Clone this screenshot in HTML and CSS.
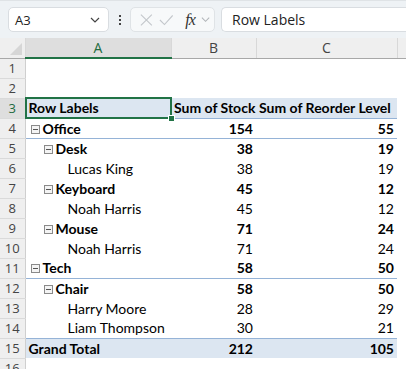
FILE: index.html
```html
<!DOCTYPE html>
<html lang="en">
<head>
<meta charset="UTF-8">
<title>Pivot Table</title>
<link rel="stylesheet" href="styles.css">
</head>
<body>
<div class="toolbar">
    <div class="namebox">
        <span>A3</span>
        <svg width="12" height="8" viewBox="0 0 12 8"><path d="M2 2 L6 6 L10 2" fill="none" stroke="#444" stroke-width="1.2"/></svg>
    </div>
    <div class="dots"><i></i><i></i><i></i></div>
    <div class="fxgroup">
        <svg width="14" height="14" viewBox="0 0 14 14"><path d="M1 1 L13 13 M13 1 L1 13" stroke="#c3c7cb" stroke-width="1.2"/></svg>
        <svg width="16" height="14" viewBox="0 0 16 14"><path d="M1 7 L6 12 L15 2" fill="none" stroke="#c3c7cb" stroke-width="1.2"/></svg>
        <span class="fx">fx</span>
        <svg width="10" height="7" viewBox="0 0 10 7"><path d="M1 1.5 L5 5.5 L9 1.5" fill="none" stroke="#b0b4b8" stroke-width="1.1"/></svg>
    </div>
    <div class="formula">Row Labels</div>
</div>

<table class="sheet">
    <colgroup>
        <col class="c-rh"><col class="c-a"><col class="c-b"><col class="c-c"><col>
    </colgroup>
    <tr class="colhead">
        <th class="corner"><span class="tri"></span></th>
        <th class="sel">A</th><th>B</th><th>C</th><th></th>
    </tr>
    <tr><th>1</th><td></td><td></td><td></td><td></td></tr>
    <tr><th>2</th><td></td><td></td><td></td><td></td></tr>
    <tr class="head">
        <th class="rsel">3</th>
        <td class="active">Row Labels<span class="handle"></span></td>
        <td>Sum of Stock</td><td>Sum of Reorder Level</td><td class="blank"></td>
    </tr>
    <tr class="cat">
        <th>4</th><td class="l1"><span class="mbox"></span>Office</td><td class="n">154</td><td class="n">55</td><td class="blank"></td>
    </tr>
    <tr class="sub">
        <th>5</th><td class="l2"><span class="mbox"></span>Desk</td><td class="n">38</td><td class="n">19</td><td></td>
    </tr>
    <tr>
        <th>6</th><td class="l3">Lucas King</td><td class="n">38</td><td class="n">19</td><td></td>
    </tr>
    <tr class="sub">
        <th>7</th><td class="l2"><span class="mbox"></span>Keyboard</td><td class="n">45</td><td class="n">12</td><td></td>
    </tr>
    <tr>
        <th>8</th><td class="l3">Noah Harris</td><td class="n">45</td><td class="n">12</td><td></td>
    </tr>
    <tr class="sub">
        <th>9</th><td class="l2"><span class="mbox"></span>Mouse</td><td class="n">71</td><td class="n">24</td><td></td>
    </tr>
    <tr>
        <th>10</th><td class="l3">Noah Harris</td><td class="n">71</td><td class="n">24</td><td></td>
    </tr>
    <tr class="cat">
        <th>11</th><td class="l1"><span class="mbox"></span>Tech</td><td class="n">58</td><td class="n">50</td><td class="blank"></td>
    </tr>
    <tr class="sub">
        <th>12</th><td class="l2"><span class="mbox"></span>Chair</td><td class="n">58</td><td class="n">50</td><td></td>
    </tr>
    <tr>
        <th>13</th><td class="l3">Harry Moore</td><td class="n">28</td><td class="n">29</td><td></td>
    </tr>
    <tr>
        <th>14</th><td class="l3">Liam Thompson</td><td class="n">30</td><td class="n">21</td><td></td>
    </tr>
    <tr class="total">
        <th>15</th><td>Grand Total</td><td class="n">212</td><td class="n">105</td><td class="blank"></td>
    </tr>
    <tr><th>16</th><td></td><td></td><td></td><td></td></tr>
</table>
</body>
</html>
```

FILE: styles.css
```css
*{box-sizing:border-box;}
body{
    margin:0;
    width:406px;
    height:369px;
    overflow:hidden;
    background:#fff;
    font-family:"Open Sans","Noto Sans",sans-serif;
}
.toolbar{
    height:38px;
    background:#eef2f5;
    border-top:1px solid #dfe3e6;
    display:flex;
    align-items:center;
    padding:0 0 0 8px;
    gap:0;
}
.namebox{
    width:101px;
    height:25px;
    background:#fff;
    border:1px solid #d9dde1;
    border-radius:5px;
    display:flex;
    align-items:center;
    justify-content:space-between;
    padding:0 7px 0 6px;
    font-size:13px;
    color:#222;
}
.dots{
    width:21px;
    display:flex;
    flex-direction:column;
    align-items:center;
    gap:2px;
}
.dots i{display:block;width:2px;height:2px;background:#444;}
.fxgroup{
    width:85px;
    height:25px;
    border:1px solid #dfe3e6;
    border-radius:5px;
    background:#f7f9fa;
    display:flex;
    align-items:center;
    padding:0 4px 0 9px;
    gap:6px;
}
.fx{
    font-family:"Liberation Serif",serif;
    font-style:italic;
    font-size:16px;
    color:#333;
    margin-left:6px;
    letter-spacing:-1px;
}
.formula{
    flex:1;
    height:25px;
    margin-left:6px;
    background:#fff;
    border:1px solid #d9dde1;
    border-right:none;
    border-radius:5px 0 0 5px;
    padding:0 0 0 10px;
    font-size:14px;
    line-height:23px;
    color:#222;
}
.sheet{
    border-collapse:collapse;
    table-layout:fixed;
    width:420px;
    font-family:"Lato","Liberation Sans",sans-serif;
    font-size:14px;
    color:#000;
}
.c-rh{width:25px;}
.c-a{width:146px;}
.c-b{width:85px;}
.c-c{width:141px;}
.sheet tr{height:20px;}
.sheet td{
    padding:0 3px;
    white-space:nowrap;
    overflow:visible;
    height:20px;
}
.sheet th{
    background:#efefef;
    font-weight:normal;
    font-family:"Open Sans","Noto Sans",sans-serif;
    font-size:13px;
    color:#444;
    border-right:1px solid #cfcfcf;
    border-bottom:1px solid #dadada;
    padding:0;
}
.colhead{height:20px;}
.colhead th{
    background:#efefef;
    border-right:1px solid #d8d8d8;
    border-bottom:1px solid #a8a8a8;
    font-size:14px;
    color:#444;
}
.colhead th.sel{
    background:#dedede;
    color:#1e6c41;
    border-bottom:2px solid #217346;
}
.corner{position:relative;}
.tri{
    position:absolute;
    right:3px;
    bottom:3px;
    width:0;
    height:0;
    border-left:12px solid transparent;
    border-bottom:12px solid #d6d6d6;
}
.sheet th.rsel{background:#dedede;color:#1e6c41;}
.head td{background:#dce6f1;font-weight:bold;border-bottom:1px solid #95b3d7;}
.head td.blank{background:none;border:none;}
.active{position:relative;}
.active::after{
    content:"";
    position:absolute;
    left:-1px;right:-1px;top:-1px;bottom:-1px;
    border:2px solid #217346;
}
.handle{
    position:absolute;
    right:-4px;
    bottom:-4px;
    width:7px;
    height:7px;
    background:#217346;
    border:1px solid #fff;
    z-index:2;
}
.n{text-align:right;}
.cat td{font-weight:bold;border-bottom:1px solid #95b3d7;}
.cat td.blank{border:none;}
.sub td{font-weight:bold;}
.l1{padding-left:5px !important;}
.l2{padding-left:18px !important;}
.l3{padding-left:42px !important;}
.mbox{
    display:inline-block;
    width:9px;
    height:9px;
    border:1px solid #8a8a8a;
    background:linear-gradient(#555,#555) center/5px 1px no-repeat,#f4f4f4;
    margin-right:3px;
    vertical-align:0;
}
.total td{background:#dce6f1;font-weight:bold;border-top:1px solid #95b3d7;}
.total td.blank{background:none;border:none;}
```
